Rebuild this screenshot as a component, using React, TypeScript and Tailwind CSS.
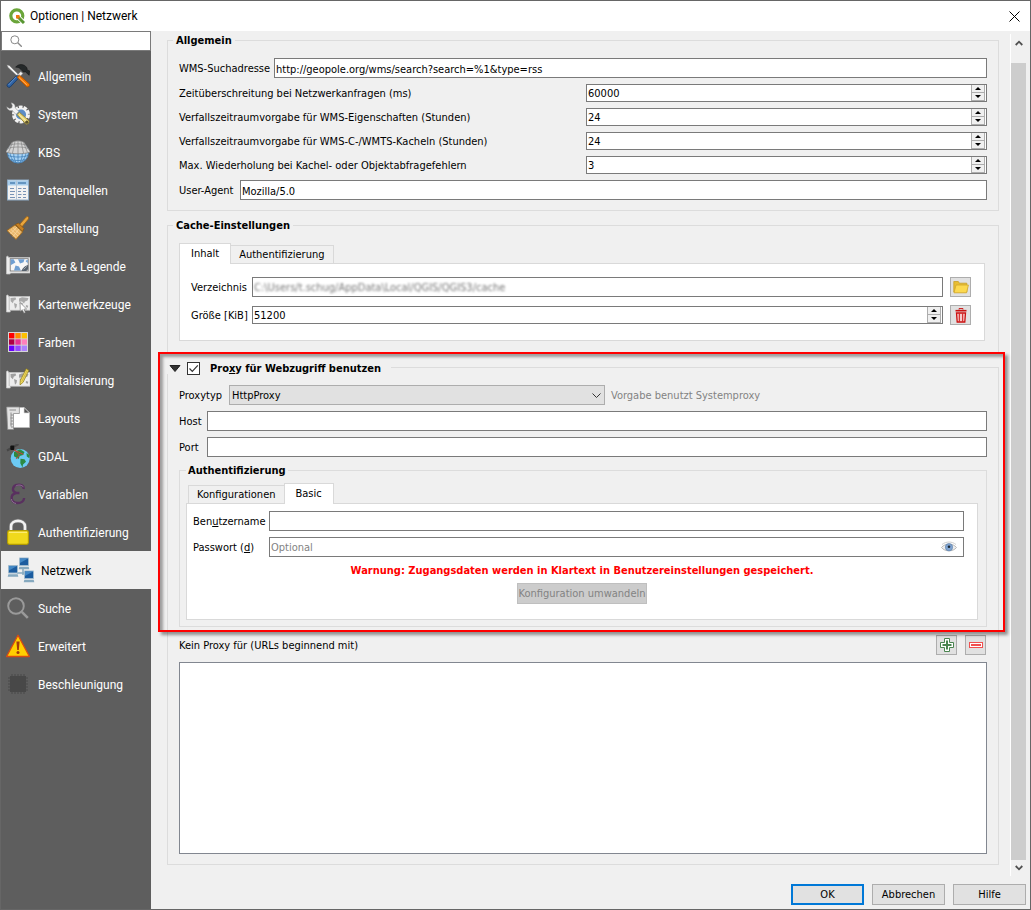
import { useState, type ReactNode } from "react";

const labelClass = "shrink-0 whitespace-nowrap pt-0.5";
const inputClass =
  "h-5 min-w-0 flex-1 rounded-none border border-[#7a7a7a] bg-white px-px pt-0.5 text-[11px] leading-4 text-black outline-none";
const legendClass = "h-3.5 font-bold leading-4";
const toolButtonClass =
  "flex h-5 w-[21px] shrink-0 items-center justify-center border border-[#adadad] bg-[#e1e1e1]";
const dialogButtonClass = "h-[21px] w-[73px] bg-[#e1e1e1] text-center";

function ToolsIcon() {
  return (
    <svg viewBox="0 0 24 24" className="size-6">
      <path d="M.8.8l2.600.6L13 11l-1.400 1.400L2 3.400z" fill="#f0f0f0" stroke="#666" strokeWidth=".5" />
      <path d="M11.800 10.400l3-2.800 2 2-2.700 3z" fill="#efefef" stroke="#777" strokeWidth=".4" />
      <path d="M11.300 11.200l2.200 2L4 23.200c-1.800.6-3.400-.8-3-2.600z" fill="#2f62a3" stroke="#173866" strokeWidth=".8" />
      <path d="M10 13l-7.500 8" stroke="#6f9bd0" strokeWidth=".8" />
      <path d="M9.600 3.200c2.200-3 6-3.300 9-1.700L21 3.700l.2 2.200 2.400 1-.4 4.400-3.700-3.400-2.200.2L15 5.500c-1.600-1.800-3-2.400-5.400-2.300z" fill="#25292a" stroke="#111" strokeWidth=".5" />
      <path d="M11 13.200l2.500-2 9.900 8.700c.8 1.800-1 3.600-2.700 2.900z" fill="#f57900" stroke="#a94e00" strokeWidth=".8" />
      <path d="M13 13.500l7.800 7.400" stroke="#ffb066" strokeWidth="1" />
    </svg>
  );
}

function SystemIcon() {
  return (
    <svg viewBox="0 0 24 24" className="size-6">
      <circle cx="15" cy="12.500" r="7.400" fill="none" stroke="#f2f2f2" strokeWidth="3.200" strokeDasharray="3.600 1.050" />
      <circle cx="15" cy="12.500" r="6" fill="#5b8cc6" stroke="#f1f1f1" strokeWidth="1.800" />
      <path d="M5 .7c2.700.2 4.500 2.200 4.200 5.100l3.600 3.800-2.800 2.800-3.600-3.800C3.600 9 1 7.500.7 4.700l2.700 1.800 2.400-.7.5-2.400z" fill="#f3f3f3" stroke="#888" strokeWidth=".5" />
      <path d="M11 12.500l2.400-2.200 9.300 8.200c1.200 2-.9 4.400-3 3.400z" fill="#e8d577" stroke="#8b7b29" strokeWidth=".8" />
      <path d="M13 12.800l7 6.300" stroke="#fff3ad" />
      <circle cx="20.800" cy="20.200" r="1.600" fill="#5a5230" />
    </svg>
  );
}

function CrsIcon() {
  return (
    <svg viewBox="0 0 24 24" className="size-6" fill="none">
      <circle cx="12" cy="12.500" r="10.500" fill="#a9d3f4" stroke="#4d86b9" />
      <path d="M2 15.500c5 2 15 2 20 0M5 19.500c4 1.400 10 1.400 14 0M12 12v11M8 12c-.8 4 .4 8 2.200 10.700M16 12c.8 4-.4 8-2.200 10.700M4 12c.2 3.800 1.500 7 4.500 10M20 12c-.2 3.800-1.500 7-4.500 10" stroke="#3f7fb8" strokeWidth=".8" />
      <path d="M6 2.200c4-1.800 8-1.800 12 0L24.500 12c-7.500 2.400-17.500 2.400-25 0z" fill="#d4d4d4" stroke="#777" strokeWidth=".7" />
      <path d="M4 5c5-1.600 11-1.600 16 0M1.500 8.500c6-2 15-2 21 0M12 1v12.500M9 1.500L6.500 13M15 1.500L17.500 13M6.500 2.500L2.500 12.500M17.500 2.500l4 10" stroke="#858585" strokeWidth=".7" />
    </svg>
  );
}

function TableIcon() {
  return (
    <svg viewBox="0 0 24 24" className="size-6">
      <rect x="1.500" y="2" width="21" height="20" fill="#f2f2f2" stroke="#8eaac4" />
      <rect x="2" y="2.500" width="20" height="5" fill="#a8cdeb" />
      <path d="M4 5h5M12 5h8" stroke="#4d82b4" strokeWidth="1.400" />
      <path d="M4 10.500h4M4 13.500h5M4 16.500h4M4 19.500h5M12 10.500h3.500M12 13.500h3M12 16.500h3.500M12 19.500h3M17 10.500h3M17 13.500h3M17 16.500h3M17 19.500h3" stroke="#7893b5" />
      <path d="M10.500 2.500v19" stroke="#b3c5d6" />
    </svg>
  );
}

function BrushIcon() {
  return (
    <svg viewBox="0 0 24 24" className="size-6">
      <path d="M20.200 1c1.600-1.200 3.200.3 2.200 2l-6.600 8-2.500-2.300z" fill="#e9a53d" stroke="#9a6113" strokeWidth=".8" />
      <path d="M9.500 8.500l3-1.500 5.500 5.600-1.500 2.800z" fill="#c57f22" stroke="#89530c" strokeWidth=".7" />
      <path d="M9 9l7.500 7L10 23.400 1 14.500z" fill="#eab669" stroke="#a16714" strokeWidth=".8" />
      <path d="M3 15l7 6.500M5 13.500l7 6.500M7 11.700l7 6.500M13 13L7 20.500M11 11l-6.500 7" stroke="#f9dba7" strokeWidth=".7" />
    </svg>
  );
}

function MapSheet({ land, children }: { land: string; children?: ReactNode }) {
  return (
    <svg viewBox="0 0 24 24" className="size-6">
      <path d="M2.500 4.500H24v13.700H4.200V20H.5V3.800C.6 2.600 2.500 2.600 2.500 4.500z" fill="#ededed" stroke="#c5c5c5" strokeWidth=".7" />
      <path d="M3.200 5v13" stroke="#b5b5b5" strokeWidth=".8" />
      <path d="M4.500 6l5-.5.7 1.700-2.500 1.600-.8 2.500-2.200-2zM8 11l3 1.200-.5 2.800L9 16.800zM13 6.500l3-1.200 6.500.6-1 2.700-2.500.8-1 2.200-2-2-3 .2zM13.500 10.500l3.300.5-.4 3.300-1.500 1.700zM20 13l2.300.7-.6 2-1.900-.8z" fill={land} />
      {children}
    </svg>
  );
}

function MapLegendIcon() {
  return (
    <svg viewBox="0 0 24 24" className="size-6">
      <path d="M2.500 3.500H24v15.500H4.200V20H.5V3c.1-1.200 2-1.200 2 .5z" fill="#ececec" stroke="#c5c5c5" strokeWidth=".7" />
      <rect x="4.200" y="4.700" width="18" height="12.300" fill="#f7f7f7" stroke="#707070" strokeWidth=".8" />
      <path d="M4.600 5.200h3l1.800 3.400-4.800 2.700zM12 5.200h6.500l-1 3-3.500 1.400zM8 16.400l1.500-4.800 3.500.8 1.800 4zM19.500 7l2.300-1.500v3.700z" fill="#6f9fd2" />
      <path d="M15.500 17c1-3 4-5.600 6.700-6v4.200L20.200 17z" fill="#55606c" />
      <path d="M17.600 15.400l3.200-3.100" stroke="#cfd6dd" strokeWidth=".6" />
    </svg>
  );
}

function MapToolsIcon() {
  return (
    <MapSheet land="#a9a9a9">
      <path d="M14 10.500l.3 9 2-1.800 1.600 3.500 1.500-.7-1.500-3.300 2.700-.2z" fill="#fff" stroke="#666" strokeWidth=".6" />
    </MapSheet>
  );
}

function DigitizingIcon() {
  return (
    <MapSheet land="#9f9f9f">
      <path d="M20.200.8l2.600 1.400-5.600 12-3.200 2.700.2-4.200z" fill="#f3dd62" stroke="#8c7a1b" strokeWidth=".7" />
      <path d="M21.300 2l-5.600 11.800" stroke="#b79f2b" strokeWidth=".6" />
    </MapSheet>
  );
}

function ColorsIcon() {
  const rows = [
    ["#ff0000", "#ff8c00", "#ffc000"],
    ["#ae0044", "#e83091", "#ff80bd"],
    ["#6a00ff", "#9448ff", "#ad80ff"],
  ];
  return (
    <svg viewBox="0 0 24 24" className="size-6">
      <rect x="2" y="2" width="20" height="20" fill="#d5d5d5" />
      {rows.map((row, y) =>
        row.map((c, x) => (
          <rect key={c} x={3 + x * 6.3} y={3 + y * 6.3} width="5.400" height="5.400" fill={c} />
        ))
      )}
    </svg>
  );
}

function LayoutIcon() {
  return (
    <svg viewBox="0 0 24 24" className="size-6">
      <path d="M5 1.500h13l5.500 5.500v14.500H5z" fill="#fff" stroke="#bdbdbd" strokeWidth=".7" />
      <path d="M18 1.500V7h5.500z" fill="#555" stroke="#ddd" strokeWidth=".7" />
      <path d="M.6 1h12.800v6.500H7.500V23.500H1.700z" fill="#e2e2e2" stroke="#8d8d8d" strokeWidth=".8" />
      <path d="M3.500 4h6.500M5 6.500v14M7 9H5M7 12H4.500M7 15H5M7 18H4.500M7 21H5" stroke="#868686" strokeWidth=".9" />
    </svg>
  );
}

function GdalIcon() {
  return (
    <svg viewBox="0 0 24 24" className="size-6">
      <circle cx="14.200" cy="14.500" r="9.500" fill="#6cc9f3" />
      <path d="M8 8l6-2.700L18.500 8 17 11l-3.300 1-1 3-4.700-2.700zM14.500 14.800l4 .4 1.500 2.600-3 2.700-.5 3-2.200-4.200zM20.500 9l3 2-.2 3.300-2.500-1.700z" fill="#2c8a43" />
      <path d="M8.500 6l5 5-3.500 4M8.500 6l9 4.500" stroke="#d93a3a" strokeWidth=".9" fill="none" />
      <path d="M1 6.500l4-2.200M8 2.500L12.500 0" stroke="#474747" strokeWidth="2.200" />
      <rect x="4.300" y="1.500" width="4" height="4.600" rx="1" fill="#111" />
    </svg>
  );
}

function EpsilonIcon() {
  return (
    <svg viewBox="0 0 24 24" className="size-6" fill="none">
      <path d="M17.500 7c.6-3.600-3-4.700-5.700-4.200-5.500.8-6.700 6.500-1.400 8.200h3-3c-7 1.500-6 9.500 1 10 3.500.2 6.500-1.500 6.700-5" stroke="#59305f" strokeWidth="2.400" />
      <path d="M17.500 5.200c-1.300-2.500-5.500-2.800-7.800-1M5.500 17c0 2.500 2 4 4.500 4.500" stroke="#a186a6" strokeWidth=".7" />
    </svg>
  );
}

function LockIcon() {
  return (
    <svg viewBox="0 0 24 28" className="h-7 w-6" fill="none">
      <path d="M5 14V8.500C5 .8 19 .8 19 8.500V14" stroke="#777" strokeWidth="4" />
      <path d="M5 14V8.500C5 1 19 1 19 8.500V14" stroke="#f1f1f1" strokeWidth="2.600" />
      <rect x="1.600" y="12.600" width="20.800" height="13.800" rx="1.800" fill="#f0d91c" stroke="#b39c00" strokeWidth="1.100" />
      <path d="M3 14.300h18" stroke="#fff089" />
    </svg>
  );
}

function Monitor({ x, y }: { x: number; y: number }) {
  return (
    <g transform={`translate(${x} ${y})`}>
      <rect width="10" height="8.500" rx=".8" fill="#9db8cc" />
      <rect x="1" y="1" width="8" height="6.500" fill="#1c5c9f" />
      <path d="M1 1h8L1 5.500z" fill="#4388c5" />
      <path d="M.3 9.300h9.400l.6 2.400H-.3z" fill="#86a9bf" />
    </g>
  );
}

function NetworkIcon() {
  return (
    <svg viewBox="0 0 28 26" className="h-[26px] w-7">
      <path d="M10 16h9M16 12v6" stroke="#86a9bf" strokeWidth="1.500" />
      <Monitor x={12} y={0.5} />
      <Monitor x={1} y={8} />
      <Monitor x={17} y={13.5} />
    </svg>
  );
}

function SearchIcon() {
  return (
    <svg viewBox="0 0 24 24" className="size-6" fill="none" stroke="#9a9a9a">
      <circle cx="10" cy="10" r="7.800" strokeWidth="1.900" />
      <path d="M15.800 15.800l6 6" strokeWidth="2.600" />
    </svg>
  );
}

function WarningIcon() {
  return (
    <svg viewBox="0 0 24 24" className="size-6">
      <path d="M12 1.200L23.400 22.500H.6z" fill="#ffcf00" stroke="#d94b12" strokeWidth="1.300" strokeLinejoin="round" />
      <path d="M10.400 7.500h3.200l-.8 8.500h-1.600z" fill="#a23a0b" />
      <circle cx="12" cy="18.600" r="1.500" fill="#a23a0b" />
    </svg>
  );
}

function ChipIcon() {
  return (
    <svg viewBox="0 0 24 24" className="size-6">
      <rect x="4" y="4" width="16" height="16" fill="#484848" />
      <path d="M6 2v20M9 2v20M12 2v20M15 2v20M18 2v20M2 6h20M2 9h20M2 12h20M2 15h20M2 18h20" stroke="#484848" />
    </svg>
  );
}

const pages = [
  { label: "Allgemein", icon: <ToolsIcon /> },
  { label: "System", icon: <SystemIcon /> },
  { label: "KBS", icon: <CrsIcon /> },
  { label: "Datenquellen", icon: <TableIcon /> },
  { label: "Darstellung", icon: <BrushIcon /> },
  { label: "Karte & Legende", icon: <MapLegendIcon /> },
  { label: "Kartenwerkzeuge", icon: <MapToolsIcon /> },
  { label: "Farben", icon: <ColorsIcon /> },
  { label: "Digitalisierung", icon: <DigitizingIcon /> },
  { label: "Layouts", icon: <LayoutIcon /> },
  { label: "GDAL", icon: <GdalIcon /> },
  { label: "Variablen", icon: <EpsilonIcon /> },
  { label: "Authentifizierung", icon: <LockIcon /> },
  { label: "Netzwerk", icon: <NetworkIcon /> },
  { label: "Suche", icon: <SearchIcon /> },
  { label: "Erweitert", icon: <WarningIcon /> },
  { label: "Beschleunigung", icon: <ChipIcon /> },
];

function SpinBox({ id, initial }: { id: string; initial: number }) {
  const [value, setValue] = useState(initial);
  return (
    <div className="flex h-[18px] min-w-0 flex-1 border border-[#7a7a7a] bg-white">
      <input
        id={id}
        type="number"
        value={value}
        onChange={(e) => setValue(Number(e.target.value))}
        className="min-w-0 flex-1 px-px pt-0.5 text-[11px] leading-[14px] outline-none [appearance:textfield] [&::-webkit-inner-spin-button]:appearance-none"
      />
      <div className="mr-px flex w-3.5 flex-col border-x border-b border-[#adadad] bg-[#f0f0f0]">
        <button aria-label="Erhöhen" onClick={() => setValue(value + 1)} className="flex h-2 items-center justify-center border-b border-[#adadad]">
          <svg viewBox="0 0 6 3" className="h-[3px] w-1.5"><path d="M0 3L3 0l3 3z" /></svg>
        </button>
        <button aria-label="Verringern" onClick={() => setValue(value - 1)} className="flex flex-1 items-center justify-center">
          <svg viewBox="0 0 6 3" className="h-[3px] w-1.5"><path d="M0 0h6L3 3z" /></svg>
        </button>
      </div>
    </div>
  );
}

function Tab({ active, onClick, children }: { active: boolean; onClick: () => void; children: ReactNode }) {
  return (
    <button
      role="tab"
      aria-selected={active}
      onClick={onClick}
      className={
        active
          ? "relative z-10 -mb-px h-[21px] border border-b-0 border-[#d9d9d9] bg-white px-[11px] pb-px"
          : "h-[18px] border border-b-0 border-[#d9d9d9] bg-[#f0f0f0] px-2 pt-px first:border-r-0 last:border-l-0"
      }
    >
      {children}
    </button>
  );
}

const timeouts = [
  { id: "timeout", label: "Zeitüberschreitung bei Netzwerkanfragen (ms)", value: 60000 },
  { id: "wms-caps", label: "Verfallszeitraumvorgabe für WMS-Eigenschaften (Stunden)", value: 24 },
  { id: "wms-tiles", label: "Verfallszeitraumvorgabe für WMS-C-/WMTS-Kacheln (Stunden)", value: 24 },
  { id: "retries", label: "Max. Wiederholung bei Kachel- oder Objektabfragefehlern", value: 3 },
];

export default function App() {
  const [page, setPage] = useState("Netzwerk");
  const [cacheTab, setCacheTab] = useState("Inhalt");
  const [authTab, setAuthTab] = useState("Basic");
  const [useProxy, setUseProxy] = useState(true);

  return (
    <div className="flex min-h-screen flex-col border border-[#666] bg-[#f0f0f0] font-['DejaVu_Sans_Condensed','DejaVu_Sans',sans-serif] text-[11px] leading-[14px] text-black">
      <header className="flex h-[30px] items-center bg-white pr-2 pl-2 font-['Roboto',sans-serif] text-xs">
        <svg viewBox="0 0 16 16" className="mr-[5px] size-4" fill="none">
          <circle cx="7.800" cy="7.800" r="6" stroke="#6aa53a" strokeWidth="3.200" />
          <path d="M8.500 8.500l6.500 6.500" stroke="#fff" strokeWidth="4.600" />
          <path d="M9 9l6 6" stroke="#589632" strokeWidth="3" />
          <path d="M7 7h3.500v3.500H7z" fill="#ee7913" />
        </svg>
        <h1 className="flex-1">Optionen | Netzwerk</h1>
        <button aria-label="Schließen" className="flex size-4 items-center justify-center">
          <svg viewBox="0 0 11 11" className="size-[11px]" stroke="#000"><path d="M.5.500l10 10M10.500.500l-10 10" /></svg>
        </button>
      </header>

      <div className="flex flex-1">
        <aside className="flex w-[150px] shrink-0 flex-col bg-[#5e5e5e]">
          <label className="flex h-5 items-center border border-[#7a7a7a] bg-white pl-2">
            <svg viewBox="0 0 12 12" className="size-3 shrink-0" fill="none" stroke="#888">
              <circle cx="4.800" cy="4.800" r="4" />
              <path d="M7.800 7.800l4 4" strokeWidth="1.300" />
            </svg>
            <input aria-label="Suchen" className="min-w-0 flex-1 px-1 outline-none" />
          </label>
          <nav className="flex flex-col pt-1.5 font-['Roboto',sans-serif] text-xs">
            {pages.map((p) => (
              <button
                key={p.label}
                onClick={() => setPage(p.label)}
                className={
                  p.label === page
                    ? "flex h-[38px] items-center gap-1.5 bg-[#f0f0f0] pl-1.5 text-left"
                    : "flex h-[38px] items-center gap-2 pl-[5px] text-left text-white"
                }
              >
                <span className="shrink-0">{p.icon}</span>
                <span className={labelClass}>{p.label}</span>
              </button>
            ))}
          </nav>
        </aside>

        <div className="flex min-w-0 flex-1 flex-col">
          <div className="flex flex-1 pr-1">
            <main className="flex min-w-0 flex-1 flex-col gap-[7px] pt-0.5 pr-[11px] pb-[11px] pl-4">
              {/* Allgemein */}
              <fieldset className="border border-[#dcdcdc] px-[11px] pt-[11px] pb-2.5">
                <legend className={`${legendClass} -ml-1.5 px-[3px]`}>Allgemein</legend>
                <div className="flex flex-col gap-1.5">
                  <div className="flex items-center gap-1.5">
                    <label htmlFor="wms" className={`${labelClass} w-[89px]`}>WMS-Suchadresse</label>
                    <input id="wms" defaultValue="http://geopole.org/wms/search?search=%1&type=rss" className={inputClass} />
                  </div>
                  {timeouts.map((t) => (
                    <div key={t.id} className="grid grid-cols-2 items-center gap-1.5">
                      <label htmlFor={t.id} className={labelClass}>{t.label}</label>
                      <SpinBox id={t.id} initial={t.value} />
                    </div>
                  ))}
                  <div className="flex items-center gap-1.5">
                    <label htmlFor="agent" className={`${labelClass} w-[55px]`}>User-Agent</label>
                    <input id="agent" defaultValue="Mozilla/5.0" className={inputClass} />
                  </div>
                </div>
              </fieldset>

              {/* Cache */}
              <fieldset className="border border-[#dcdcdc] px-[11px] pt-[11px] pb-[11px]">
                <legend className={`${legendClass} -ml-1.5 px-[3px]`}>Cache-Einstellungen</legend>
                <div className="pr-0.5">
                  <div role="tablist" className="flex items-end">
                    {["Inhalt", "Authentifizierung"].map((t) => (
                      <Tab key={t} active={t === cacheTab} onClick={() => setCacheTab(t)}>{t}</Tab>
                    ))}
                  </div>
                  <div className="flex flex-col gap-2 border border-[#d9d9d9] bg-white pt-[13px] pr-[13px] pb-[15px] pl-[11px]">
                    <div className="flex items-center gap-[7px]">
                      <label htmlFor="dir" className={`${labelClass} w-[54px]`}>Verzeichnis</label>
                      <div className="flex h-5 min-w-0 flex-1 border border-[#7a7a7a] bg-white">
                        <input id="dir" defaultValue="C:\Users/t.schug/AppData\Local/QGIS/QGIS3/cache" className="min-w-0 flex-1 px-px pt-0.5 text-[#777] blur-[1px] outline-none" />
                      </div>
                      <button aria-label="Verzeichnis wählen" className={toolButtonClass}>
                        <svg viewBox="0 0 16 14" className="h-3.5 w-4">
                          <path d="M.8 12V1.500h4.500l1 1.700h7.500V12z" fill="#e8bd32" stroke="#c89f25" strokeWidth=".8" />
                          <path d="M3 5h12.400l-1.800 7.800H1z" fill="#fcd94f" stroke="#cfa62c" strokeWidth=".8" />
                        </svg>
                      </button>
                    </div>
                    <div className="flex items-center gap-[7px]">
                      <label htmlFor="size" className={`${labelClass} w-[54px]`}>Größe [KiB]</label>
                      <SpinBox id="size" initial={51200} />
                      <button aria-label="Cache leeren" className={toolButtonClass}>
                        <svg viewBox="0 0 12 15" className="h-[15px] w-3" fill="none" stroke="#cc1010">
                          <path d="M4 1.500V.6h4v.9" />
                          <path d="M.5 2.700h11" strokeWidth="1.600" />
                          <path d="M1.500 5l.7 9h7.600l.7-9z" fill="#f7caca" strokeWidth="1.300" />
                          <path d="M4.300 5.500v8M7.700 5.500v8" />
                        </svg>
                      </button>
                    </div>
                  </div>
                </div>
              </fieldset>

              {/* Proxy */}
              <fieldset className="flex flex-1 flex-col border border-[#dcdcdc] px-[11px] pt-[11px] pb-2.5">
                <legend className={`${legendClass} -ml-3 flex items-center bg-[#f0f0f0] pt-0.5 pr-2.5 pl-0.5`}>
                  <svg viewBox="0 0 12 7" className="mr-1.5 h-[7px] w-3"><path d="M1 .5h10L6 6.500z" fill="#333" stroke="#222" /></svg>
                  <input
                    id="proxy"
                    type="checkbox"
                    checked={useProxy}
                    onChange={(e) => setUseProxy(e.target.checked)}
                    className="peer size-[13px] appearance-none border border-[#333] bg-white"
                  />
                  <svg viewBox="0 0 13 13" className="pointer-events-none -ml-[13px] hidden size-[13px] peer-checked:block" fill="none">
                    <path d="M2.500 6.500l2.800 2.800 5.500-6" stroke="#333" strokeWidth="1.200" />
                  </svg>
                  <label htmlFor="proxy" className={`${labelClass} pl-2.5`}>Pro<u>x</u>y für Webzugriff benutzen</label>
                </legend>

                <div className="relative flex flex-col gap-1.5">
                  {/* highlight frame */}
                  <div className="pointer-events-none absolute -top-[33px] -right-[18px] -bottom-[5px] -left-[21px] z-20 border-2 border-[#f00] shadow-[3px_3px_3px_rgba(0,0,0,0.4),inset_3px_3px_3px_rgba(0,0,0,0.35)]" />
                  <div className="flex items-center gap-1.5">
                    <label htmlFor="type" className={`${labelClass} w-11`}>Proxytyp</label>
                    <div className="relative flex h-5 w-[376px]">
                      <select id="type" className="flex-1 appearance-none border border-[#adadad] bg-[#e1e1e1] pt-0.5 pl-0.5">
                        <option>HttpProxy</option>
                        <option>DefaultProxy</option>
                        <option>Socks5Proxy</option>
                      </select>
                      <svg viewBox="0 0 9 6" className="pointer-events-none absolute top-2 right-1 h-1.5 w-[9px]" fill="none" stroke="#333">
                        <path d="M.5.500l4 4 4-4" />
                      </svg>
                    </div>
                    <span className={`${labelClass} text-[#838383]`}>Vorgabe benutzt Systemproxy</span>
                  </div>
                  <div className="flex items-center gap-1.5">
                    <label htmlFor="host" className={`${labelClass} w-[22px]`}>Host</label>
                    <input id="host" className={inputClass} />
                  </div>
                  <div className="flex items-center gap-1.5">
                    <label htmlFor="port" className={`${labelClass} w-[22px]`}>Port</label>
                    <input id="port" className={inputClass} />
                  </div>

                  <fieldset className="border border-[#dcdcdc] px-1.5 pt-1.5 pb-1.5">
                    <legend className={`${legendClass} px-0.5`}>Authentifizierung</legend>
                    <div className="pr-0.5">
                      <div role="tablist" className="flex items-end pl-0.5">
                        {["Konfigurationen", "Basic"].map((t) => (
                          <Tab key={t} active={t === authTab} onClick={() => setAuthTab(t)}>{t}</Tab>
                        ))}
                      </div>
                      <div className="flex flex-col gap-1.5 border border-[#d9d9d9] bg-white px-1.5 pt-[7px] pb-[15px]">
                        <div className="flex items-center gap-1.5 pr-[7px]">
                          <label htmlFor="user" className={`${labelClass} w-[70px]`}>Ben<u>u</u>tzername</label>
                          <input id="user" className={inputClass} />
                        </div>
                        <div className="flex items-center gap-1.5 pr-[7px]">
                          <label htmlFor="pass" className={`${labelClass} w-[70px]`}>Passwort (<u>d</u>)</label>
                          <div className="flex h-5 min-w-0 flex-1 items-center border border-[#7a7a7a] bg-white pr-1.5">
                            <input id="pass" type="password" placeholder="Optional" className="min-w-0 flex-1 px-px pt-0.5 outline-none placeholder:text-[#838383]" />
                            <button aria-label="Passwort anzeigen">
                              <svg viewBox="0 0 16 12" className="h-3 w-4">
                                <path d="M.5 6.500C4 2 12 2 15.500 6.500 12 11 4 11 .5 6.500z" fill="#f0f0f0" stroke="#aaa" strokeWidth=".8" />
                                <path d="M1 3.500c4-3.300 10-3.300 14 0" fill="none" stroke="#cfcfcf" />
                                <circle cx="8" cy="6.200" r="3.700" fill="#7fa3d0" stroke="#51749d" strokeWidth=".5" />
                                <circle cx="8" cy="5.800" r="1.300" fill="#1b2733" />
                              </svg>
                            </button>
                          </div>
                        </div>
                        <p className="pt-px text-center leading-[13px] font-bold text-[#f00]">
                          Warnung: Zugangsdaten werden in Klartext in Benutzereinstellungen gespeichert.
                        </p>
                        <button disabled className="h-[21px] self-center border border-[#bfbfbf] bg-[#ccc] pt-px whitespace-nowrap text-[#838383]">
                          Konfiguration umwandeln
                        </button>
                      </div>
                    </div>
                  </fieldset>
                </div>

                <div className="flex items-center gap-2 pt-2 pr-px pb-[7px]">
                  <label htmlFor="no-proxy" className={`${labelClass} flex-1`}>Kein Proxy für (URLs beginnend mit)</label>
                  <button aria-label="Hinzufügen" className={toolButtonClass}>
                    <svg viewBox="0 0 14 14" className="size-3.5">
                      <path d="M4.500.500h5v4h4v5h-4v4h-5v-4h-4v-5h4z" fill="#fff" stroke="#4a8450" />
                      <path d="M7 2.500v9M2.500 7h9" stroke="#4a8450" strokeWidth="2" />
                    </svg>
                  </button>
                  <button aria-label="Entfernen" className={toolButtonClass}>
                    <svg viewBox="0 0 14 6" className="h-1.5 w-3.5">
                      <rect x=".5" y=".5" width="13" height="5" fill="#fff" stroke="#f05050" />
                      <path d="M2 3h10" stroke="#f05050" strokeWidth="2" />
                    </svg>
                  </button>
                </div>
                <textarea id="no-proxy" className="min-h-[100px] w-full flex-1 resize-none border border-[#828790] bg-white outline-none" />
              </fieldset>
            </main>

            {/* scroll bar */}
            <div className="mt-[3px] flex w-4 flex-col border-l border-white">
              <button aria-label="Nach oben" className="flex h-[17px] items-center justify-center">
                <svg viewBox="0 0 8 6" className="h-1.5 w-2" fill="none" stroke="#505050" strokeWidth="1.800"><path d="M.7 5L4 1.700 7.300 5" /></svg>
              </button>
              <div className="flex flex-1 flex-col pt-3">
                <div className="flex-1 bg-[#cdcdcd]" />
              </div>
              <button aria-label="Nach unten" className="flex h-4 items-center justify-center">
                <svg viewBox="0 0 8 6" className="h-1.5 w-2" fill="none" stroke="#505050" strokeWidth="1.800"><path d="M.7 1L4 4.300 7.300 1" /></svg>
              </button>
            </div>
          </div>

          <footer className="flex justify-end gap-2 pt-2 pr-1 pb-1">
            <button className={`${dialogButtonClass} border-2 border-[#0078d7]`}>OK</button>
            <button className={`${dialogButtonClass} border border-[#adadad] pt-px`}>Abbrechen</button>
            <button className={`${dialogButtonClass} border border-[#adadad] pt-px`}>Hilfe</button>
          </footer>
        </div>
      </div>
    </div>
  );
}
